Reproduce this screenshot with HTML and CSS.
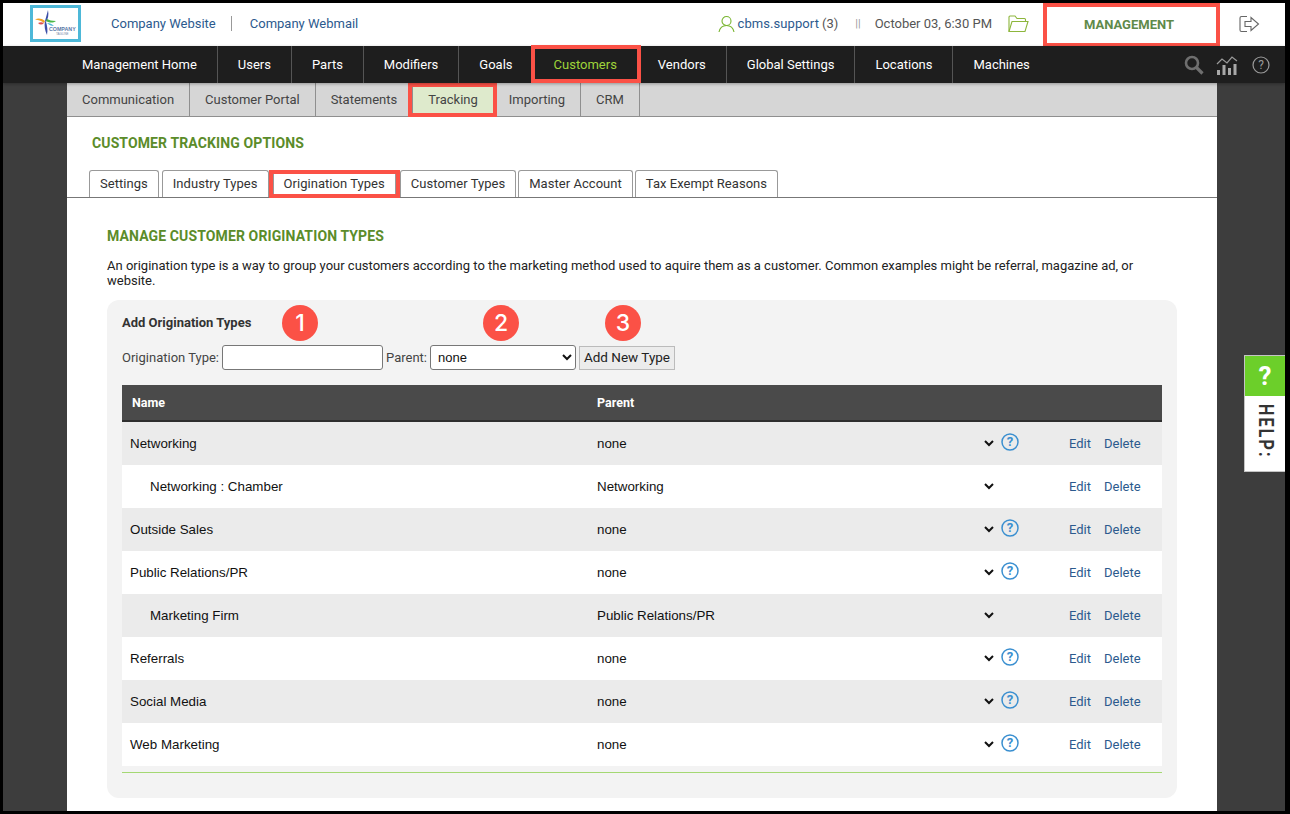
FILE: index.html
```html
<!DOCTYPE html>
<html lang="en">
<head>
<meta charset="utf-8">
<title>Customer Tracking Options</title>
<link rel="stylesheet" href="styles.css">
</head>
<body>
<div class="frame">
  <header class="top">
    <div class="logo">
      <svg width="45" height="31" viewBox="0 0 45 31">
        <path d="M12 13 C13 9 14 6 15 2 C16 7 15 11 13 14Z" fill="#3b4fa8"/>
        <path d="M12 13 C8 10 5 10 2 11.500 C6 12 9 13 11 15Z" fill="#f0a020"/>
        <path d="M12 13 C11 18 12 23 14 27 C15 22 14 17 13 14Z" fill="#3b4fa8"/>
        <path d="M13 13 C17 15 20 15 23 13 C19 13 16 12 14 11Z" fill="#4cb848"/>
        <path d="M5 15 C7 14 9 14 11 15 C9 17 7 17 5 15Z" fill="#e05050"/>
        <path d="M14 15 C17 15 19 16 21 18 C18 18 16 17 14 15Z" fill="#4db8d8"/>
        <text x="16" y="23" class="logo-big">COMPANY</text>
        <text x="23" y="27" class="logo-small">TAGLINE</text>
      </svg>
    </div>
    <a class="toplink">Company Website</a>
    <span class="topsep"></span>
    <a class="toplink">Company Webmail</a>
    <div class="topright">
      <svg class="usericon" width="17" height="18" viewBox="0 0 17 18" fill="none" stroke="#79b530" stroke-width="1.1">
        <circle cx="8.500" cy="6" r="4.500"/>
        <path d="M1 17 C2 12 5 10.500 8.500 10.500 S15 12 16 17"/>
      </svg>
      <a class="username">cbms.support</a>
      <span class="count">(3)</span>
      <span class="bars">||</span>
      <span class="date">October 03, 6:30 PM</span>
      <svg class="folder" width="21" height="18" viewBox="0 0 21 18" fill="none" stroke="#8db63c" stroke-width="1.100">
        <path d="M1 16.500 V2 Q1 1 2 1 H7 L9 3.500 H16.500 Q17.500 3.500 17.500 4.500 V6.500"/>
        <path d="M1 16.500 L4 6.500 H20 L17 16.500Z"/>
      </svg>
      <div class="mgmt">MANAGEMENT</div>
      <svg class="logout" width="21" height="18" viewBox="0 0 21 18" fill="none" stroke="#666" stroke-width="1.100">
        <path d="M8 1.500 H2.500 Q1 1.500 1 3 V15 Q1 16.500 2.500 16.500 H8"/>
        <path d="M6 6.500 H12 V2.500 L19.500 9 L12 15.500 V11.500 H6Z"/>
      </svg>
    </div>
  </header>
  <nav class="mainnav">
    <a class="navitem">Management Home</a>
    <a class="navitem">Users</a>
    <a class="navitem">Parts</a>
    <a class="navitem">Modifiers</a>
    <a class="navitem">Goals</a>
    <a class="navitem navactive">Customers</a>
    <a class="navitem">Vendors</a>
    <a class="navitem">Global Settings</a>
    <a class="navitem">Locations</a>
    <a class="navitem navlast">Machines</a>
    <div class="navicons">
      <svg width="20" height="20" viewBox="0 0 20 20" fill="none" stroke="#6f6f6f">
        <circle cx="8" cy="8" r="6" stroke-width="2.600"/>
        <path d="M12.500 12.500 L18.500 18.500" stroke-width="3.200"/>
      </svg>
      <svg width="22" height="20" viewBox="0 0 22 20">
        <path d="M1 9 L6 4 L11 8 L16 2 L21 6" fill="none" stroke="#9a9a9a" stroke-width="1.200"/>
        <path d="M1 15h3v5H1zM6.500 10h3v10h-3zM12 13h3v7h-3zM17.500 9h3v11h-3z" fill="#a8a8a8"/>
      </svg>
      <svg width="18" height="18" viewBox="0 0 18 18">
        <circle cx="9" cy="9" r="8" fill="none" stroke="#9a9a9a" stroke-width="1.200"/>
        <text x="9" y="13" class="qmark">?</text>
      </svg>
    </div>
  </nav>
  <div class="stage">
    <main class="sheet">
      <div class="subnav">
        <a class="subitem">Communication</a>
        <a class="subitem">Customer Portal</a>
        <a class="subitem">Statements</a>
        <a class="subitem subactive">Tracking</a>
        <a class="subitem">Importing</a>
        <a class="subitem">CRM</a>
      </div>
      <h1 class="title">CUSTOMER TRACKING OPTIONS</h1>
      <div class="tabs">
        <a class="tab">Settings</a>
        <a class="tab">Industry Types</a>
        <a class="tab tabactive">Origination Types</a>
        <a class="tab tabtight">Customer Types</a>
        <a class="tab tabtight">Master Account</a>
        <a class="tab">Tax Exempt Reasons</a>
      </div>
      <section class="content">
        <h2 class="heading">MANAGE CUSTOMER ORIGINATION TYPES</h2>
        <p class="intro">An origination type is a way to group your customers according to the marketing method used to aquire them as a customer. Common examples might be referral, magazine ad, or website.</p>
        <div class="panel">
          <span class="badge badge1">1</span>
          <span class="badge badge2">2</span>
          <span class="badge badge3">3</span>
          <h3 class="addtitle">Add Origination Types</h3>
          <form class="addform">
            <label class="flabel" for="otype">Origination Type:</label>
            <input class="finput" id="otype" type="text">
            <label class="flabel" for="oparent">Parent:</label>
            <select class="fselect" id="oparent"><option>none</option></select>
            <button class="fbutton" type="button">Add New Type</button>
          </form>
          <div class="table">
            <div class="row head"><span class="hname">Name</span><span>Parent</span></div>
            <div class="row"><span class="cname">Networking</span><span class="cparent">none</span><svg class="chev" width="10" height="7" viewBox="0 0 10 7"><path d="M1 1 L5 5 L9 1" fill="none" stroke="#111" stroke-width="2"/></svg><svg class="qicon" width="18" height="18" viewBox="0 0 18 18"><circle cx="9" cy="9" r="8" fill="none" stroke="#3a8fd0" stroke-width="1.500"/><text x="9" y="13" class="qblue">?</text></svg><a class="act">Edit</a><a class="act">Delete</a></div>
            <div class="row"><span class="cname sub">Networking : Chamber</span><span class="cparent">Networking</span><svg class="chev" width="10" height="7" viewBox="0 0 10 7"><path d="M1 1 L5 5 L9 1" fill="none" stroke="#111" stroke-width="2"/></svg><span></span><a class="act">Edit</a><a class="act">Delete</a></div>
            <div class="row"><span class="cname">Outside Sales</span><span class="cparent">none</span><svg class="chev" width="10" height="7" viewBox="0 0 10 7"><path d="M1 1 L5 5 L9 1" fill="none" stroke="#111" stroke-width="2"/></svg><svg class="qicon" width="18" height="18" viewBox="0 0 18 18"><circle cx="9" cy="9" r="8" fill="none" stroke="#3a8fd0" stroke-width="1.500"/><text x="9" y="13" class="qblue">?</text></svg><a class="act">Edit</a><a class="act">Delete</a></div>
            <div class="row"><span class="cname">Public Relations/PR</span><span class="cparent">none</span><svg class="chev" width="10" height="7" viewBox="0 0 10 7"><path d="M1 1 L5 5 L9 1" fill="none" stroke="#111" stroke-width="2"/></svg><svg class="qicon" width="18" height="18" viewBox="0 0 18 18"><circle cx="9" cy="9" r="8" fill="none" stroke="#3a8fd0" stroke-width="1.500"/><text x="9" y="13" class="qblue">?</text></svg><a class="act">Edit</a><a class="act">Delete</a></div>
            <div class="row"><span class="cname sub">Marketing Firm</span><span class="cparent">Public Relations/PR</span><svg class="chev" width="10" height="7" viewBox="0 0 10 7"><path d="M1 1 L5 5 L9 1" fill="none" stroke="#111" stroke-width="2"/></svg><span></span><a class="act">Edit</a><a class="act">Delete</a></div>
            <div class="row"><span class="cname">Referrals</span><span class="cparent">none</span><svg class="chev" width="10" height="7" viewBox="0 0 10 7"><path d="M1 1 L5 5 L9 1" fill="none" stroke="#111" stroke-width="2"/></svg><svg class="qicon" width="18" height="18" viewBox="0 0 18 18"><circle cx="9" cy="9" r="8" fill="none" stroke="#3a8fd0" stroke-width="1.500"/><text x="9" y="13" class="qblue">?</text></svg><a class="act">Edit</a><a class="act">Delete</a></div>
            <div class="row"><span class="cname">Social Media</span><span class="cparent">none</span><svg class="chev" width="10" height="7" viewBox="0 0 10 7"><path d="M1 1 L5 5 L9 1" fill="none" stroke="#111" stroke-width="2"/></svg><svg class="qicon" width="18" height="18" viewBox="0 0 18 18"><circle cx="9" cy="9" r="8" fill="none" stroke="#3a8fd0" stroke-width="1.500"/><text x="9" y="13" class="qblue">?</text></svg><a class="act">Edit</a><a class="act">Delete</a></div>
            <div class="row"><span class="cname">Web Marketing</span><span class="cparent">none</span><svg class="chev" width="10" height="7" viewBox="0 0 10 7"><path d="M1 1 L5 5 L9 1" fill="none" stroke="#111" stroke-width="2"/></svg><svg class="qicon" width="18" height="18" viewBox="0 0 18 18"><circle cx="9" cy="9" r="8" fill="none" stroke="#3a8fd0" stroke-width="1.500"/><text x="9" y="13" class="qblue">?</text></svg><a class="act">Edit</a><a class="act">Delete</a></div>
          </div>
          <div class="tableline"></div>
        </div>
      </section>
    </main>
    <aside class="help">
      <div class="helpq">?</div>
      <div class="helptext">HELP:</div>
    </aside>
  </div>
</div>
</body>
</html>
```
FILE: styles.css
```css
* { box-sizing: border-box; }
html, body { margin: 0; padding: 0; }
body { font-family: Roboto, "Liberation Sans", sans-serif; font-size: 13px; color: #333; background: #000; }
a { text-decoration: none; }
.frame { width: 1290px; height: 814px; border: solid #000; border-width: 3px 5px 3px 3px; overflow: hidden; background: #3d3d3d; display: flex; flex-direction: column; }

.top { height: 43px; background: #fff; display: flex; align-items: center; padding-left: 27px; flex: none; }
.logo { width: 51px; height: 37px; border: 3px solid #4db8d8; display: flex; align-items: center; justify-content: center; margin-bottom: 2px; flex: none; }
.logo-big { font: bold 5.300px "Liberation Sans", sans-serif; fill: #5a78a8; }
.logo-small { font: 3px "Liberation Sans", sans-serif; fill: #7a8aa8; }
.toplink { color: #2c5a8e; font-size: 13px; margin: 0 0 2px 30px; }
.topsep { width: 1px; height: 15px; background: #999; margin: 0 -12px 2px 15px; }
.topright { margin-left: auto; display: flex; align-items: center; height: 100%; }
.usericon { margin: 0 3px 2px 0; }
.username { color: #2c5a8e; margin-bottom: 2px; letter-spacing: .08px; }
.count { color: #555; margin: 0 0 2px 3px; }
.bars { color: #999; margin: 0 0 2px 17px; font-size: 11px; }
.date { color: #555; margin: 0 0 2px 14px; }
.folder { margin: 0 0 2px 16px; }
.mgmt { width: 177px; height: 44px; margin: 0 0 -1px 14px; padding: 0 5px 2px 0; border: 4px solid #fb5146; border-top-width: 4px; display: flex; align-items: center; justify-content: center; color: #5f8a4a; font-weight: 700; font-size: 13px; }
.logout { margin: 0 25px 2px 19px; }

.mainnav { height: 37px; background: #1e1e1e; display: flex; align-items: stretch; padding-left: 59px; flex: none; position: relative; z-index: 1; box-shadow: 0 1px 3px rgba(0,0,0,.3); }
.navitem { color: #fff; padding: 0 20px; display: flex; align-items: center; border-right: 1px solid #555; font-size: 13px; }
.navlast { border-right: 0; }
.navactive { color: #9fd43a; position: relative; }
.navactive::after { content: ""; position: absolute; top: -1px; bottom: 0; left: -3px; right: -4px; border: 4px solid #fb5146; }
.navicons { margin-left: auto; display: flex; align-items: center; padding-right: 15px; }
.navicons svg + svg { margin-left: 12px; }
.navicons svg:last-child { margin-left: 14px; }
.qmark { font: 12px Roboto, sans-serif; fill: #9a9a9a; text-anchor: middle; }

.stage { flex: 1; position: relative; padding-left: 64px; min-height: 0; }
.sheet { width: 1150px; height: 100%; background: #fff; overflow: hidden; }

.subnav { height: 34px; background: #d6d6d6; border-bottom: 1px solid #8f8f8f; display: flex; }
.subitem { padding: 0 15px; display: flex; align-items: center; border-right: 1px solid #8f8f8f; color: #444; }
.subactive { background: #deeacc; position: relative; }
.subactive::after { content: ""; position: absolute; top: 0; bottom: -1px; left: -5px; right: -4px; border: 4px solid #fb5146; }

.title { margin: 18px 0 0 25px; font-size: 14px; line-height: 16px; letter-spacing: .12px; color: #5b8c2a; font-weight: 700; }
.tabs { display: flex; align-items: flex-end; height: 29px; margin-top: 18px; padding-left: 22px; gap: 3px; border-bottom: 1px solid #777; }
.tab { height: 27px; padding: 0 10px 2px; border: 1px solid #999; border-bottom: 0; border-radius: 3px 3px 0 0; display: flex; align-items: center; color: #333; background: #fff; letter-spacing: .04px; }
.tabactive { position: relative; margin: 0 1px; }
.tabactive::after { content: ""; position: absolute; top: -1px; bottom: -1px; left: -5px; right: -5px; border: 4px solid #fb5146; }
.tabtight { margin-right: -1px; }

.content { padding: 0 40px; }
.heading { margin: 30px 0 0; font-size: 14px; line-height: 16px; letter-spacing: .12px; color: #5b8c2a; font-weight: 700; }
.intro { margin: 14px 0 0; font-size: 13px; line-height: 15px; color: #222; width: 1060px; }
.panel { position: relative; margin-top: 12px; width: 1070px; height: 498px; background: #f3f3f3; border-radius: 12px; padding: 15px 15px 0; }
.badge { position: absolute; top: 5px; width: 36px; height: 36px; border-radius: 50%; background: #fb5146; color: #fff; font: 500 23px Inter, "Liberation Sans", sans-serif; display: flex; align-items: center; justify-content: center; }
.badge1 { left: 175px; }
.badge2 { left: 376px; }
.badge3 { left: 498px; }
.addtitle { margin: 0; font-size: 13px; line-height: 16px; color: #333; font-weight: 700; }
.addform { display: flex; align-items: center; margin-top: 14px; height: 25px; }
.flabel { color: #444; font-size: 13px; }
.finput { width: 161px; height: 25px; margin: 0 3px 0 3px; border: 1px solid #777; border-radius: 3px; background: #fff; padding: 0 4px; }
.fselect { width: 146px; height: 25px; margin: 0 3px; border: 1px solid #777; border-radius: 3px; background: #fff; font: 13px "Liberation Sans", sans-serif; color: #111; padding-left: 3px; }
.fbutton { width: 96px; height: 24px; border: 1px solid #bbb; background: #ececec; color: #222; font: 13.500px Roboto, sans-serif; padding: 0 0 2px; }

.table { margin-top: 15px; width: 1040px; }
.row { display: grid; grid-template-columns: 475px 386px 18px 68px 35px 58px; align-items: center; height: 43px; background: #fff; }
.row:nth-child(even) { background: #ebebeb; }
.row.head { height: 37px; background: #4a4a4a; border-bottom: 2px solid #2e2e2e; color: #fff; font-weight: 700; font-size: 12.500px; grid-template-columns: 475px 1fr; }
.hname { padding-left: 10px; }
.cname { padding-left: 8px; font: 13.350px "Liberation Sans", sans-serif; color: #111; }
.cname.sub { padding-left: 28px; }
.cparent { font: 13.350px "Liberation Sans", sans-serif; color: #111; }
.chev { margin-left: 1px; }
.qicon { margin-top: -3px; }
.qblue { font: bold 13px Roboto, sans-serif; fill: #3a8fd0; text-anchor: middle; }
.act { color: #2c5a8e; font-size: 13px; }
.tableline { width: 1040px; height: 1px; margin-top: 6px; background: #a4d873; }

.help { position: absolute; left: 1241px; top: 272px; width: 41px; height: 117px; background: #fff; border: 1px solid #c4c4c4; border-right: 0; }
.helpq { height: 40px; background: #6ccf2a; color: #fff; font-size: 26px; font-weight: 700; display: flex; align-items: center; justify-content: center; }
.helptext { writing-mode: vertical-rl; font-size: 16px; letter-spacing: 2.200px; font-weight: 700; color: #333; margin: 8px 0 0 10px; line-height: 20px; transform: scaleX(1.3); }
```
